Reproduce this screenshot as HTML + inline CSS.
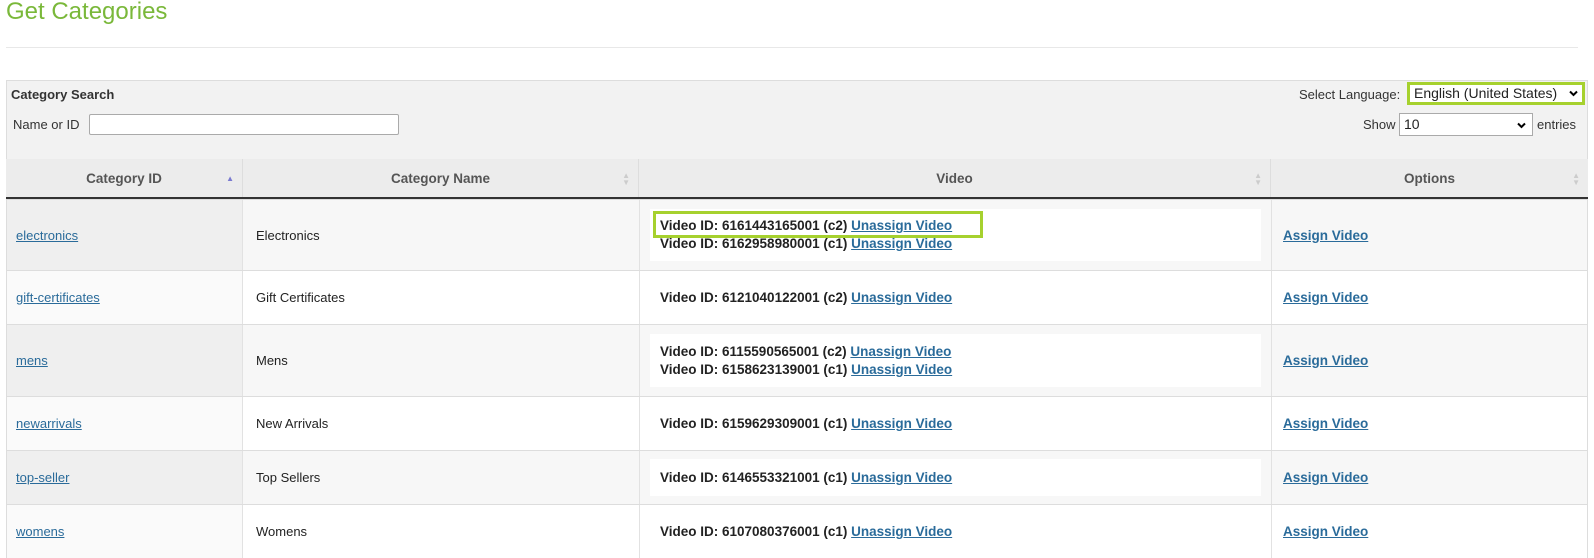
<!DOCTYPE html>
<html><head><meta charset="utf-8"><style>
*{box-sizing:border-box;margin:0;padding:0}
body{width:1594px;height:554px;overflow:hidden;background:#fff;font-family:"Liberation Sans",Arial,sans-serif;font-size:13px;color:#222;position:relative}
.a{position:absolute}
h1{position:absolute;left:6px;top:-2px;font-size:24px;font-weight:normal;color:#7ab83a}
a{color:#2a6b9a;text-decoration:underline}
.box{left:6px;top:80px;width:1582px;height:474px;border:1px solid #ddd;background:#f2f2f2}
.row{position:absolute;left:6px;width:1582px;border-top:1px solid #ddd;border-left:1px solid #ddd;border-right:1px solid #ddd}
.c{position:absolute;top:0;bottom:0;display:flex;align-items:center;border-right:1px solid #e2e2e2}
.v{position:absolute;left:643px;width:611px;background:#fff;font-weight:bold;font-size:13.5px;line-height:18px;padding-left:10px;display:flex;flex-direction:column;justify-content:center}
.opt a{font-weight:bold;font-size:13.5px}
.vb{font-weight:bold;font-size:13.5px}
.th{position:absolute;top:0;bottom:0;display:flex;align-items:center;justify-content:center;color:#555;font-weight:bold;font-size:13.5px;border-right:1px solid #ddd}
.s{position:absolute;right:8px;top:13px;font-size:8px;color:#ccc;line-height:7px}
</style></head><body>
<h1>Get Categories</h1>
<div class="a" style="left:6px;top:47px;width:1572px;height:1px;background:#e8e8e8"></div>
<div class="a box"></div>
<div class="a" style="left:11px;top:87px;font-weight:bold;color:#333">Category Search</div>
<div class="a" style="left:13px;top:117px;color:#333">Name or ID</div>
<div class="a" style="left:89px;top:114px;width:310px;height:21px;background:#fff;border:1px solid #aaa;border-radius:2px"></div>
<div class="a" style="left:1299px;top:87px;color:#333">Select Language:</div>
<div class="a" style="left:1407px;top:82px;width:178px;height:23px;border:3px solid #a6d12e;background:#fff;font-size:14px;padding-left:4px;line-height:17px">English (United States)
<svg style="position:absolute;right:4px;top:5px" width="9" height="7" viewBox="0 0 9 7"><path d="M1 1.5L4.5 5L8 1.5" fill="none" stroke="#000" stroke-width="2"/></svg></div>
<div class="a" style="left:1363px;top:117px;color:#333">Show</div>
<div class="a" style="left:1399px;top:113px;width:134px;height:23px;border:1px solid #aaa;background:#fff;padding-left:4px;line-height:21px;font-size:14px">10
<svg style="position:absolute;right:6px;top:8px" width="9" height="7" viewBox="0 0 9 7"><path d="M1 1.5L4.5 5L8 1.5" fill="none" stroke="#000" stroke-width="2"/></svg></div>
<div class="a" style="left:1537px;top:117px;color:#333">entries</div>
<!-- header -->
<div class="a" style="left:6px;top:159px;width:1582px;height:40px;background:#ececec;border-bottom:2px solid #333">
<div class="th" style="left:0;width:237px">Category ID<span class="s" style="color:#7a7ad0;top:16px">&#9650;</span></div>
<div class="th" style="left:237px;width:396px">Category Name<span class="s">&#9650;<br>&#9660;</span></div>
<div class="th" style="left:633px;width:632px">Video<span class="s">&#9650;<br>&#9660;</span></div>
<div class="th" style="left:1265px;width:317px;border-right:0">Options<span class="s">&#9650;<br>&#9660;</span></div>
</div>
<!-- rows -->
<div class="row" style="top:199px;height:71px;background:#f7f7f7"><div class="c" style="left:0;width:236px;background:#efefef;padding-left:9px"><a>electronics</a></div><div class="c" style="left:236px;width:397px;padding-left:13px">Electronics</div><div class="c" style="left:633px;width:632px"></div><div class="v" style="top:9px;height:52px"><div>Video ID: 6161443165001 (c2) <a>Unassign Video</a></div><div>Video ID: 6162958980001 (c1) <a>Unassign Video</a></div></div><div class="a" style="left:646px;top:11px;width:330px;height:27px;border:3px solid #a6d12e"></div><div class="c opt" style="left:1265px;width:316px;padding-left:11px;border:0"><a>Assign Video</a></div></div>
<div class="row" style="top:270px;height:54px;background:#fff"><div class="c" style="left:0;width:236px;background:#fafafa;padding-left:9px"><a>gift-certificates</a></div><div class="c" style="left:236px;width:397px;padding-left:13px">Gift Certificates</div><div class="c vb" style="left:633px;width:632px;padding-left:20px">Video ID: 6121040122001 (c2)&nbsp;<a>Unassign Video</a></div><div class="c opt" style="left:1265px;width:316px;padding-left:11px;border:0"><a>Assign Video</a></div></div>
<div class="row" style="top:324px;height:72px;background:#f7f7f7"><div class="c" style="left:0;width:236px;background:#efefef;padding-left:9px"><a>mens</a></div><div class="c" style="left:236px;width:397px;padding-left:13px">Mens</div><div class="c" style="left:633px;width:632px"></div><div class="v" style="top:9px;height:53px"><div>Video ID: 6115590565001 (c2) <a>Unassign Video</a></div><div>Video ID: 6158623139001 (c1) <a>Unassign Video</a></div></div><div class="c opt" style="left:1265px;width:316px;padding-left:11px;border:0"><a>Assign Video</a></div></div>
<div class="row" style="top:396px;height:54px;background:#fff"><div class="c" style="left:0;width:236px;background:#fafafa;padding-left:9px"><a>newarrivals</a></div><div class="c" style="left:236px;width:397px;padding-left:13px">New Arrivals</div><div class="c vb" style="left:633px;width:632px;padding-left:20px">Video ID: 6159629309001 (c1)&nbsp;<a>Unassign Video</a></div><div class="c opt" style="left:1265px;width:316px;padding-left:11px;border:0"><a>Assign Video</a></div></div>
<div class="row" style="top:450px;height:54px;background:#f7f7f7"><div class="c" style="left:0;width:236px;background:#efefef;padding-left:9px"><a>top-seller</a></div><div class="c" style="left:236px;width:397px;padding-left:13px">Top Sellers</div><div class="c" style="left:633px;width:632px"></div><div class="v" style="top:8px;height:37px"><div>Video ID: 6146553321001 (c1) <a>Unassign Video</a></div></div><div class="c opt" style="left:1265px;width:316px;padding-left:11px;border:0"><a>Assign Video</a></div></div>
<div class="row" style="top:504px;height:54px;background:#fff"><div class="c" style="left:0;width:236px;background:#fafafa;padding-left:9px"><a>womens</a></div><div class="c" style="left:236px;width:397px;padding-left:13px">Womens</div><div class="c vb" style="left:633px;width:632px;padding-left:20px">Video ID: 6107080376001 (c1)&nbsp;<a>Unassign Video</a></div><div class="c opt" style="left:1265px;width:316px;padding-left:11px;border:0"><a>Assign Video</a></div></div>
</body></html>
